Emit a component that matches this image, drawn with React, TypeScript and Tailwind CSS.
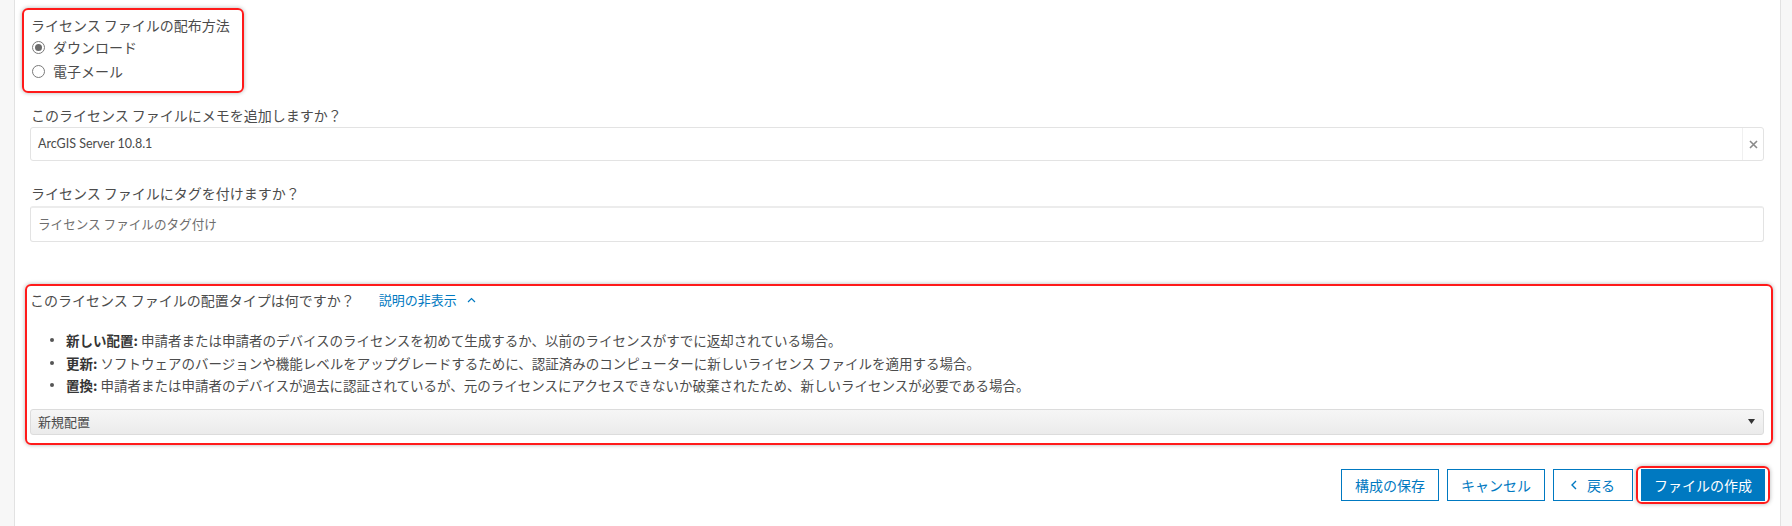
import React from "react"

const font = "font-['Noto_Sans_CJK_JP','Noto_Sans',sans-serif]"

const Radio = ({ checked, label }: { checked?: boolean; label: string }) => (
  <label className="flex items-center h-[24px] gap-[8px] pl-[1px]">
    <span className="w-[13px] h-[13px] rounded-full border border-[#7a7a7a] bg-white flex items-center justify-center">
      {checked && <span className="w-[7px] h-[7px] rounded-full bg-[#6b6b6b]" />}
    </span>
    <span className="text-[14px] text-[#4c4c4c]">{label}</span>
  </label>
)

const Bullet = ({ title, text }: { title: string; text: string }) => (
  <li className="flex items-center h-[22.5px]">
    <span className="ml-[20px] w-[4px] h-[4px] rounded-full bg-[#555]" />
    <span className="ml-[12px] text-[13.5px] text-[#4c4c4c] whitespace-nowrap">
      <b className="font-bold text-[#353535]">{title}</b> {text}
    </span>
  </li>
)

export default function App() {
  return (
    <div className={`w-[1792px] h-[526px] bg-white flex overflow-hidden ${font}`}>
      {/* LEFT STRIP */}
      <div className="w-[15px] h-full bg-[#f7f7f7] border-r border-[#e2e2e2]" />

      {/* MAIN */}
      <div className="flex-1 pt-[8px] px-[7px] flex flex-col">
        {/* DISTRIBUTION */}
        <div className="w-[222px] h-[85px] border-2 border-[#ff1a1a] rounded-[6px] shadow-[0_0_4px_rgba(0,0,0,0.3)] pl-[7px] pt-[5px]">
          <div className="text-[14px] leading-[20px] text-[#4c4c4c]">ライセンス ファイルの配布方法</div>
          <Radio checked label="ダウンロード" />
          <Radio label="電子メール" />
        </div>

        {/* MEMO */}
        <div className="mt-[12px] ml-[9px] text-[14px] leading-[20px] text-[#4c4c4c]">
          このライセンス ファイルにメモを追加しますか？
        </div>
        <div className="mt-[2px] ml-[8px] mr-[9px] h-[34px] border border-[#e3e3e3] rounded-[3px] flex items-center">
          <div className="flex-1 pl-[7px] text-[12.5px] text-[#4a4a4a] font-['Lato','Noto_Sans_CJK_JP',sans-serif]">
            ArcGIS Server 10.8.1
          </div>
          <div className="w-[21px] h-full border-l border-[#f0f0f0] flex items-center justify-center">
            <svg width="9" height="9" viewBox="0 0 9 9">
              <path d="M1 1 L8 8 M8 1 L1 8" stroke="#8a8a8a" strokeWidth="1.6" />
            </svg>
          </div>
        </div>

        {/* TAGS */}
        <div className="mt-[22px] ml-[9px] text-[14px] leading-[20px] text-[#4c4c4c]">
          ライセンス ファイルにタグを付けますか？
        </div>
        <div className="mt-[3px] ml-[8px] mr-[9px] h-[36px] border border-[#e3e3e3] border-t-2 border-t-[#ececec] rounded-[3px] flex items-center pl-[7px] text-[12.6px] text-[#6e6e6e]">
          ライセンス ファイルのタグ付け
        </div>

        {/* DEPLOYMENT TYPE */}
        <div className="mt-[42px] ml-[3px] h-[161px] border-2 border-[#ff1a1a] rounded-[6px] shadow-[0_0_4px_rgba(0,0,0,0.3)] pl-[3px] pr-[7px] pt-[4px]">
          <div className="flex items-center h-[20px]">
            <span className="text-[14px] text-[#4c4c4c]">このライセンス ファイルの配置タイプは何ですか？</span>
            <span className="ml-[24px] text-[13px] text-[#0079c1]">説明の非表示</span>
            <svg className="ml-[10px]" width="9" height="6" viewBox="0 0 9 6">
              <path d="M1 5 L4.5 1.5 L8 5" fill="none" stroke="#0079c1" strokeWidth="1.2" />
            </svg>
          </div>
          <ul className="mt-[19px]">
            <Bullet
              title="新しい配置:"
              text="申請者または申請者のデバイスのライセンスを初めて生成するか、以前のライセンスがすでに返却されている場合。"
            />
            <Bullet
              title="更新:"
              text="ソフトウェアのバージョンや機能レベルをアップグレードするために、認証済みのコンピューターに新しいライセンス ファイルを適用する場合。"
            />
            <Bullet
              title="置換:"
              text="申請者または申請者のデバイスが過去に認証されているが、元のライセンスにアクセスできないか破棄されたため、新しいライセンスが必要である場合。"
            />
          </ul>
          <div className="mt-[12px] h-[26px] border border-[#dcdcdc] rounded-[3px] bg-gradient-to-b from-[#f6f6f6] to-[#ebebeb] flex items-center justify-between pl-[7px] pr-[8px]">
            <span className="text-[13px] text-[#4c4c4c]">新規配置</span>
            <svg width="7" height="5" viewBox="0 0 7 5">
              <path d="M0 0 L7 0 L3.5 5 Z" fill="#333" />
            </svg>
          </div>
        </div>

        {/* ACTIONS */}
        <div className="mt-[21px] flex items-start justify-end pr-[3px]">
          <div className="flex gap-[8px] pt-[3px]">
            <button className="w-[98px] h-[32px] border border-[#0079c1] text-[#0079c1] text-[14px] bg-white">構成の保存</button>
            <button className="w-[98px] h-[32px] border border-[#0079c1] text-[#0079c1] text-[14px] bg-white">キャンセル</button>
            <button className="w-[80px] h-[32px] border border-[#0079c1] text-[#0079c1] text-[14px] bg-white flex items-center justify-center gap-[10px]">
              <svg width="6" height="10" viewBox="0 0 6 10">
                <path d="M5 1 L1 5 L5 9" fill="none" stroke="#0079c1" strokeWidth="1.4" />
              </svg>
              <span>戻る</span>
            </button>
          </div>
          <div className="ml-[3px] border-2 border-[#ff1a1a] rounded-[6px] shadow-[0_0_4px_rgba(0,0,0,0.3)] py-[1px] px-[3px]">
            <button className="w-[124px] h-[32px] bg-[#0079c1] text-white text-[14px]">ファイルの作成</button>
          </div>
        </div>
      </div>

      {/* RIGHT STRIP */}
      <div className="w-[12px] h-full bg-[#f7f7f7] border-l border-[#e2e2e2]" />
    </div>
  )
}
